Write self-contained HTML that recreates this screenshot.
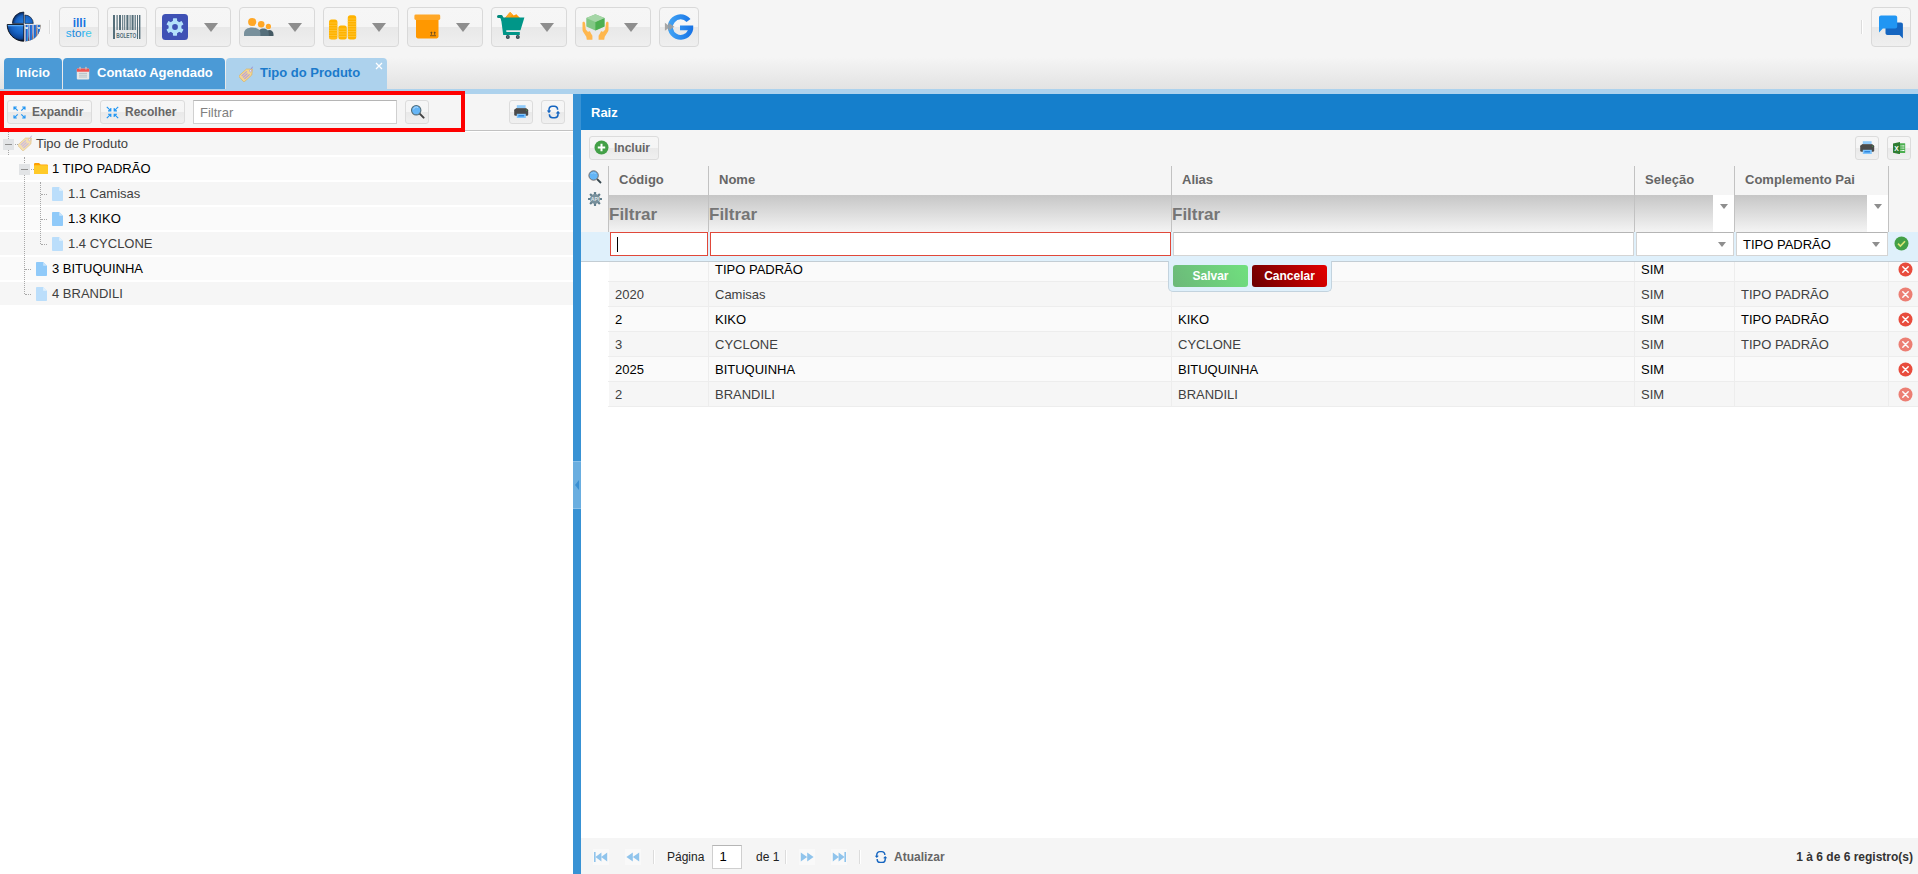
<!DOCTYPE html>
<html lang="pt-BR">
<head>
<meta charset="utf-8">
<title>Tipo do Produto</title>
<style>
*{box-sizing:border-box;margin:0;padding:0}
html,body{width:1918px;height:874px;overflow:hidden;background:#fff;font-family:"Liberation Sans",Arial,sans-serif;font-size:13px;color:#000}
.abs{position:absolute}
#top{position:absolute;left:0;top:0;width:1918px;height:89px;background:linear-gradient(#f5f5f5 0,#f5f5f5 57px,#e3e3e3 89px)}
.tb{position:absolute;top:7px;height:40px;border:1px solid #d9d9d9;border-radius:4px;background:linear-gradient(#f6f6f6 0,#f5f5f5 50%,#e8e8e8 50%,#efefef 100%)}
.tb svg{position:absolute}
.tb .arr{position:absolute;left:47.500px;top:15px;width:0;height:0;border-left:7px solid transparent;border-right:7px solid transparent;border-top:9px solid #8e8e8e}
.sep{position:absolute;width:1px;background:#fff;border-left:1px solid #dcdcdc;width:2px}
.tab{position:absolute;top:58px;height:31px;border-radius:4px 4px 0 0;background:#4b9ad6;color:#fff;font-weight:bold;font-size:13px;line-height:30px;white-space:nowrap}
.tab.act{background:#add2ed;color:#1b7acb}
#strip{position:absolute;left:0;top:89px;width:1918px;height:5px;background:#add2ed}
/* left panel */
#left{position:absolute;left:0;top:94px;width:573px;height:780px;background:#fff}
#ltb{position:absolute;left:0;top:0;width:573px;height:37px;background:#f5f5f5;border-bottom:1px solid #c2c2c2}
.sb{position:absolute;height:24px;border:1px solid #dcdcdc;border-radius:3px;background:linear-gradient(#f6f6f6 0,#f5f5f5 50%,#e9e9e9 50%,#f0f0f0 100%);font-size:12px;font-weight:bold;color:#666;line-height:21px;white-space:nowrap}
.sb svg{position:absolute}
.sb span{margin-top:1px}
#red{position:absolute;left:0;top:91px;width:465px;height:41px;border:4px solid #fe0000;z-index:5}
.trow{position:absolute;left:0;width:573px;height:23px;font-size:13px;line-height:23px;white-space:nowrap}
.trow.a{background:#f6f6f6;color:#404040}
.trow.b{background:#fafafa;color:#000}
.trow span{position:absolute;top:0}
.trow svg{position:absolute}
/* splitter */
#split{position:absolute;left:573px;top:94px;width:8px;height:780px;background:#3892d4}
#split i{position:absolute;left:0;top:367px;width:8px;height:48px;background:#6aaee0;border-top:1px solid #8cc0e8;border-bottom:1px solid #8cc0e8}
#split b{position:absolute;left:2px;top:386px;width:0;height:0;border-top:5px solid transparent;border-bottom:5px solid transparent;border-right:4.500px solid #3a8fd2}
/* right panel */
#right{position:absolute;left:581px;top:94px;width:1337px;height:780px;background:#fff}
#rh{position:absolute;left:0;top:0;width:1337px;height:36px;background:#157fcc;color:#fff;font-weight:bold;font-size:13px;line-height:38px;padding-left:10px}
#rtb{position:absolute;left:0;top:36px;width:1337px;height:36px;background:#f5f5f5}

.hd{font-size:13px;font-weight:bold;color:#666;line-height:27px;white-space:nowrap}
.flt{height:37px;background:linear-gradient(#c6c6c6,#f4f4f4);font-size:17px;font-weight:bold;color:#767676;line-height:37px}
.flt span{position:absolute;left:0;top:1px}
.carr{position:absolute;width:0;height:0;border-left:4.500px solid transparent;border-right:4.500px solid transparent;border-top:5px solid #8e8e8e}
.grow{position:absolute;left:27px;width:1310px;height:25px;border-bottom:1px solid #ededed;font-size:13px;line-height:25px;white-space:nowrap}
.grow.a{background:#f6f6f6;color:#404040}
.grow.b{background:#fafafa;color:#000}
.grow span{position:absolute;top:0;height:24px;padding-left:6px;border-left:1px solid #ededed}
.grow span:first-child{border-left-color:#fff}
.ed{height:24px;background:#fff;border:1px solid #d4d4d4;border-top-color:#b5b5b5;font-size:13px}
.ed.err{border-color:#e0483a}
.btn{width:75px;height:22px;border-radius:3px;color:#fff;font-size:12px;font-weight:bold;line-height:22px;text-align:center}
</style>
</head>
<body>
<div id="top">
<!-- logo -->
<svg class="abs" style="left:6px;top:11px" width="36" height="32" viewBox="0 0 36 32">
<defs>
<radialGradient id="lg" gradientUnits="userSpaceOnUse" cx="15" cy="13" r="17.500"><stop offset="0" stop-color="#2a86e6"/><stop offset=".55" stop-color="#1763c4"/><stop offset=".82" stop-color="#0c4496"/><stop offset="1" stop-color="#050a16"/></radialGradient>
<radialGradient id="lg2" gradientUnits="userSpaceOnUse" cx="18" cy="13" r="12"><stop offset="0" stop-color="#2a86e6"/><stop offset=".7" stop-color="#1763c4"/><stop offset="1" stop-color="#08265a"/></radialGradient>
<clipPath id="lq"><path d="M18.900 13.600h15.500a15.500 15.500 0 0 1-15.500 16.800z"/></clipPath>
</defs>
<path d="M17.800 12.400h-11.400a11.400 11.400 0 0 1 11.400-11.400z" fill="url(#lg2)" stroke="#0a1424" stroke-width="0.700"/>
<path d="M18.900 12.400v-8.400a8.400 8.400 0 0 1 8.400 8.400z" fill="url(#lg2)" stroke="#0a1424" stroke-width="0.600"/>
<path d="M17.800 13.600v16.600a16.600 16.600 0 0 1-16.600-16.600z" fill="url(#lg)" stroke="#05080f" stroke-width="0.900"/>
<path d="M1.600 14h15.800v1.300h-15.400z" fill="#5aa9f5"/>
<g clip-path="url(#lq)"><rect x="18.900" y="13.600" width="17" height="18" fill="url(#lg)"/>
<text transform="translate(18.600 30.400) scale(1 1.500)" font-family="Liberation Sans" font-weight="bold" font-size="14.500" fill="#1a62c8" stroke="#fff" stroke-width="1.100" paint-order="stroke">illi</text></g>
</svg>
<div class="sep" style="left:49px;top:20px;height:14px"></div>
<!-- illi store -->
<div class="tb" style="left:59px;width:40px">
<svg style="left:4px;top:9px" width="32" height="22" viewBox="0 0 32 22">
<defs><linearGradient id="sg" x1="0" y1="0" x2="1" y2="0"><stop offset="0" stop-color="#29b6f6"/><stop offset=".45" stop-color="#1976d2"/><stop offset=".7" stop-color="#29b6f6"/><stop offset="1" stop-color="#4dd0e1"/></linearGradient></defs>
<text x="8.700" y="9.900" font-family="Liberation Sans" font-weight="bold" font-size="12" fill="#1a73e0">illi</text>
<text x="1.800" y="19.600" font-family="Liberation Sans" font-size="10.600" fill="url(#sg)" textLength="26" lengthAdjust="spacingAndGlyphs">store</text>
</svg>
</div>
<!-- boleto -->
<div class="tb" style="left:107px;width:40px">
<svg style="left:5px;top:7px" width="28" height="25" viewBox="0 0 28 25">
<g fill="#546e7a"><rect x="0" y="0" width="2" height="24"/><rect x="3.5" y="0" width="1.2" height="15"/><rect x="6" y="0" width="2" height="15"/><rect x="9.2" y="0" width="1" height="15"/><rect x="11.2" y="0" width="1" height="15"/><rect x="13.4" y="0" width="2" height="15"/><rect x="16.6" y="0" width="1" height="15"/><rect x="18.6" y="0" width="2" height="15"/><rect x="21.6" y="0" width="1.2" height="15"/><rect x="24" y="0" width="1" height="24"/><rect x="26" y="0" width="1.4" height="24"/></g>
<text x="3.2" y="23.2" font-family="Liberation Sans" font-weight="bold" font-size="6.6" fill="#546e7a" textLength="20" lengthAdjust="spacingAndGlyphs">BOLETO</text>
</svg>
</div>
<!-- settings -->
<div class="tb" style="left:155px;width:76px">
<svg style="left:6px;top:6px" width="26" height="26" viewBox="0 0 26 26">
<rect x="0" y="0" width="26" height="26" rx="3.5" fill="#3f51b5"/>
<g transform="translate(13 13) scale(0.900)" fill="#b3e0fb">
<g id="teeth"><rect x="-2.3" y="-9.6" width="4.6" height="19.2" rx="0.6"/><rect x="-2.3" y="-9.6" width="4.6" height="19.2" rx="0.6" transform="rotate(60)"/><rect x="-2.3" y="-9.6" width="4.6" height="19.2" rx="0.6" transform="rotate(120)"/></g>
<circle r="7.2"/><circle r="3.2" fill="#3f51b5"/></g>
</svg>
<i class="arr"></i>
</div>
<!-- people -->
<div class="tb" style="left:239px;width:76px">
<svg style="left:4px;top:9px" width="32" height="20" viewBox="0 0 32 20">
<path d="M24 19 v-1.5 c0-3 2-4.6 4-4.600 s4 1.600 4 4.600 v1.500z" fill="#455a64" transform="translate(-2.5 0)"/>
<path d="M14 19 v-2 c0-3.600 2.600-5.400 5.400-5.400 s5.400 1.800 5.400 5.400 v2z" fill="#546e7a"/>
<path d="M0 19 v-2.500 c0-4 3.600-6 8.200-6 s8.200 2 8.200 6 v2.500z" fill="#78909c"/>
<circle cx="8.200" cy="5" r="4.100" fill="#ffa726"/>
<circle cx="17.200" cy="7.200" r="3.300" fill="#ffa726"/>
<circle cx="24.400" cy="9.400" r="2.600" fill="#ffa726"/>
</svg>
<i class="arr"></i>
</div>
<!-- coins -->
<div class="tb" style="left:323px;width:76px">
<svg style="left:5.300px;top:6.600px" width="28" height="25" viewBox="0 0 28 25">
<g fill="#ffb300">
<rect x="0" y="4.500" width="8.400" height="20" rx="2.500"/>
<rect x="9.400" y="10.500" width="8.400" height="14" rx="2.500"/>
<rect x="18.800" y="0.300" width="8.400" height="24.200" rx="2.500"/>
</g>
<g stroke="#ffc940" stroke-width="0.7">
<path d="M0 8h8.400M0 10.500h8.400M0 13h8.400M0 15.500h8.400M0 18h8.400M0 20.500h8.400M0 23h8.400M9.400 14h8.400M9.400 16.500h8.400M9.400 19h8.400M9.400 21.500h8.400M18.800 4h8.400M18.800 6.500h8.400M18.800 9h8.400M18.800 11.500h8.400M18.800 14h8.400M18.800 16.500h8.400M18.800 19h8.400M18.800 21.500h8.400"/>
</g>
</svg>
<i class="arr"></i>
</div>
<!-- box -->
<div class="tb" style="left:407px;width:76px">
<svg style="left:6px;top:6.400px" width="28" height="25" viewBox="0 0 28 25">
<rect x="2" y="4" width="22.500" height="20.400" rx="1.800" fill="#ff9800"/>
<rect x="0.400" y="0.400" width="25.800" height="5.600" rx="1.400" fill="#ffa726"/>
<g fill="#6d4c1f"><rect x="16" y="21.300" width="6" height="0.900"/><path d="M17.400 17.400l1.300 1.500h-0.800v1.900h-1v-1.900h-0.800zM20.700 17.400l1.300 1.500h-0.800v1.900h-1v-1.900h-0.800z"/></g>
</svg>
<i class="arr"></i>
</div>
<!-- cart -->
<div class="tb" style="left:491px;width:76px">
<svg style="left:5px;top:4px" width="30" height="30" viewBox="0 0 30 30">
<path d="M8 6l5.100-6 3.600 3.600 2.700-1.400 3.600 3.800z" fill="#ff9800"/>
<path d="M13.100 0l2.400 2.500-3.500 3.500h-4z" fill="#ffa726"/>
<path d="M1.500 4.600h2.800l1.600 3.400" stroke="#00897b" stroke-width="3" stroke-linecap="round" stroke-linejoin="round" fill="none"/>
<path d="M3.900 5.600h23.500l-3.900 12.600h-14.300l0.200 1.900h13.400v2.900h-16.600z" fill="#009688"/>
<circle cx="10.800" cy="24.900" r="2" fill="#37474f"/><circle cx="20.800" cy="24.900" r="2" fill="#37474f"/>
<circle cx="10.800" cy="24.900" r="0.800" fill="#607d8b"/><circle cx="20.800" cy="24.900" r="0.800" fill="#607d8b"/>
</svg>
<i class="arr"></i>
</div>
<!-- hands box -->
<div class="tb" style="left:575px;width:76px">
<svg style="left:5px;top:4px" width="30" height="30" viewBox="0 0 30 30">
<path d="M14.400 2.300l9.100 3.800v8.400l-9.100 4-9.100-4v-8.400z" fill="#81c784"/>
<path d="M14.400 10l9.100-3.900v8.400l-9.100 4z" fill="#4caf50"/>
<path d="M14.400 2.300l9.100 3.800-9.100 3.900-9.100-3.900z" fill="#a5d6a7"/>
<path transform="translate(-0.800 0)" d="M3.400 9.800c0.900 0 1.400 0.600 1.500 1.500l0.700 6.300 2.300 2.400c0.700-1.400 2.600-0.700 2.500 0.800l1.800 3v4h-5.600l-0.500-3-3.200-5c-0.400-0.700-0.600-1.400-0.600-2.200v-6.600c0-0.700 0.400-1.200 1.100-1.200z" fill="#ffb74d"/>
<path transform="translate(-0.800 0)" d="M27.200 9.800c-0.900 0-1.400 0.600-1.500 1.500l-0.700 6.300-2.300 2.400c-0.700-1.400-2.600-0.700-2.500 0.800l-1.800 3v4h5.600l0.500-3 3.200-5c0.400-0.700 0.600-1.400 0.600-2.200v-6.600c0-0.700-0.400-1.200-1.100-1.200z" fill="#ffb74d"/>
</svg>
<i class="arr"></i>
</div>
<!-- G refresh -->
<div class="tb" style="left:659px;width:40px">
<svg style="left:4px;top:3px" width="32" height="32" viewBox="0 0 32 32">
<defs><linearGradient id="gg" x1="0" y1="0" x2="1" y2="0"><stop offset="0" stop-color="#42a5f5"/><stop offset="1" stop-color="#1672e6"/></linearGradient></defs>
<path d="M26.49 7.92 A12.8 12.8 0 1 0 29.20 18.20 L29.20 14.40 L16.00 14.40 L16.00 19.20 L23.90 19.20 A7.8 7.8 0 1 1 22.55 11.00 Z" fill="url(#gg)"/>
<path d="M0.900 11.800l5.400 4-5.400 4zM4.400 11.800l6 4-6 4z" fill="#9e9e9e" opacity="0.900"/>
</svg>
</div>
<div class="sep" style="left:1861px;top:20px;height:14px"></div>
<!-- chat -->
<div class="tb" style="left:1871px;width:40px">
<svg style="left:7px;top:7px" width="26" height="26" viewBox="0 0 26 26">
<path d="M8.500 7.400h13.400c1.300 0 2 0.900 2 2v14l-3.400-3.400h-12c-1.200 0-2-0.900-2-2v-8.600c0-1.200 0.900-2 2-2z" fill="#1565c0"/>
<path d="M2 0.500h14.200c1.200 0 2 0.900 2 2v9c0 1.200-0.900 2-2 2h-12.400l-3.800 4v-15c0-1.200 0.900-2 2-2z" fill="#2196f3"/>
</svg>
</div>
<!-- tabs -->
<div class="tab" style="left:4px;width:58px;padding-left:12px">Início</div>
<div class="tab" style="left:63px;width:162px">
<svg class="abs" style="left:13px;top:8px" width="14" height="14" viewBox="0 0 14 14"><rect x="0.800" y="2.600" width="12.400" height="10.800" rx="1" fill="#e6e6e6"/><path d="M0.800 3.600c0-0.700 0.500-1.200 1.200-1.200h10c0.700 0 1.200 0.500 1.200 1.200v2.200h-12.400z" fill="#ef5350"/><rect x="3.300" y="0.800" width="1.500" height="2.700" rx="0.500" fill="#bdbdbd"/><rect x="9.200" y="0.800" width="1.500" height="2.700" rx="0.500" fill="#bdbdbd"/><path d="M3 7.400h8M3 9.200h8M3 11h8" stroke="#b0bec5" stroke-width="0.900"/></svg>
<span class="abs" style="left:34px;top:0">Contato Agendado</span></div>
<div class="tab act" style="left:226px;width:161px">
<svg class="abs" style="left:12.500px;top:7px" width="17" height="17" viewBox="0 0 17 17"><g transform="translate(8.500 8.500) rotate(-42)"><path d="M-7.400 -4h9.600l4.400 4-4.400 4h-9.600c-0.600 0-1-0.400-1-1v-6c0-0.600 0.400-1 1-1z" fill="#f5d791" stroke="#d9b36a" stroke-width="0.700"/><circle cx="4" cy="0" r="1" fill="#fff" stroke="#9575cd" stroke-width="0.500"/><path d="M6 -0.700l2.200 -1" stroke="#9575cd" stroke-width="0.700"/><path d="M-6 -2h7M-6 0h6M-6 2h7" stroke="#b9a0d8" stroke-width="1.100"/></g></svg>
<span class="abs" style="left:34px;top:0">Tipo do Produto</span>
<svg class="abs" style="left:149px;top:4px" width="8" height="8" viewBox="0 0 8 8"><path d="M1 1l6 6M7 1l-6 6" stroke="#fff" stroke-width="1.300"/></svg>
</div>

</div>
<div id="strip"></div>
<div id="left">
<div id="ltb">
<div class="sb" style="left:7px;top:6px;width:85px"><svg style="left:5px;top:5px" width="13" height="13" viewBox="0 0 13 13"><g stroke="#2196f3" stroke-width="1.150" fill="none"><path d="M1 3.800v-2.800h2.800M1.200 1.200l3.500 3.500M9.200 1h2.800v2.800M11.800 1.200l-3.500 3.500M1 9.200v2.800h2.800M1.200 11.800l3.500-3.500M9.200 12h2.800v-2.800M11.800 11.800l-3.500-3.500"/></g></svg><span class="abs" style="left:24px;top:0">Expandir</span></div>
<div class="sb" style="left:100px;top:6px;width:85px"><svg style="left:5px;top:5px" width="13" height="13" viewBox="0 0 13 13"><g stroke="#2196f3" stroke-width="1.150" fill="none"><path d="M2 4.800h2.800v-2.800M4.600 4.600l-3.800-3.800M8.200 2v2.800h2.800M8.400 4.600l3.800-3.800M2 8.200h2.800v2.800M4.600 8.400l-3.800 3.800M11 8.200h-2.800v2.800M8.400 8.400l3.800 3.800"/></g></svg><span class="abs" style="left:24px;top:0">Recolher</span></div>
<div class="abs" style="left:193px;top:6px;width:204px;height:24px;background:#fff;border:1px solid #d0d0d0;border-top-color:#b5b5b5;font-size:13px;color:#808080;line-height:23px;padding-left:6px">Filtrar</div>
<div class="sb" style="left:405px;top:6px;width:24px"><svg style="left:4px;top:3px" width="15" height="15" viewBox="0 0 15 15"><path d="M9.400 9.400l4.200 4.200" stroke="#424242" stroke-width="2" stroke-linecap="round"/><circle cx="6.200" cy="6.200" r="4.700" fill="#64b5f6" stroke="#546e7a" stroke-width="1.100"/><path d="M3.400 5.400a3 3 0 0 1 4.600-1.800" stroke="#bbdefb" stroke-width="0.900" fill="none"/></svg></div>
<div class="sb" style="left:509px;top:6px;width:24px"><svg style="left:4px;top:4px" width="15" height="14" viewBox="0 0 15 14"><rect x="2.800" y="0.200" width="8.800" height="4.200" fill="#90caf9"/><path d="M2.200 3h10l1.200 1.200h-12.400z" fill="#616161"/><rect x="0.200" y="4" width="14" height="6.800" rx="1.300" fill="#4a4a4a"/><rect x="12" y="4.700" width="1" height="1" fill="#43a047"/><rect x="2.800" y="8.800" width="9" height="4.200" fill="#80c4fb"/><path d="M4.600 10h5.800l-0.600 1.600h-5.800z" fill="#2e86de"/></svg></div>
<div class="sb" style="left:541px;top:6px;width:24px"><svg style="left:4px;top:3px" width="15" height="16" viewBox="0 0 15 16"><g stroke="#1565c0" stroke-width="1.500" fill="none"><path d="M3 7.200v-1.800a3.200 3.200 0 0 1 3.200-3.200h2.200a3.200 3.200 0 0 1 3.200 3.200v0.400"/><path d="M12 8.800v1.800a3.200 3.200 0 0 1-3.200 3.200h-2.200a3.200 3.200 0 0 1-3.200-3.200v-0.400"/></g><path d="M0.800 6.600h4.400l-2.200 2.600z" fill="#1565c0"/><path d="M14.200 9.400h-4.400l2.200-2.600z" fill="#1565c0"/></svg></div>

</div>
<div class="trow a" style="top:38px"><svg style="left:18px;top:2.400px" width="17" height="17" viewBox="0 0 17 17" opacity="0.700"><g transform="translate(8.500 8.500) rotate(-42)"><path d="M-7.400 -4h9.600l4.400 4-4.400 4h-9.600c-0.600 0-1-0.400-1-1v-6c0-0.600 0.400-1 1-1z" fill="#f5d791" stroke="#d9b36a" stroke-width="0.700"/><circle cx="4" cy="0" r="1" fill="#fff" stroke="#9575cd" stroke-width="0.500"/><path d="M6 -0.700l2.200 -1" stroke="#9575cd" stroke-width="0.700"/><path d="M-6 -2h7M-6 0h6M-6 2h7" stroke="#b9a0d8" stroke-width="1.100"/></g></svg><i class="abs" style="left:3px;top:7px;width:11px;height:11px;background:#e2e4e6"></i><i class="abs" style="left:5px;top:12px;width:7px;height:1px;background:#909090"></i><span style="left:36px">Tipo de Produto</span></div>
<div class="trow b" style="top:63px"><svg style="left:34px;top:6px" width="14" height="11" viewBox="0 0 14 12" preserveAspectRatio="none"><path d="M0 1.400c0-0.800 0.600-1.400 1.400-1.400h3.600l1.600 1.600h6c0.800 0 1.400 0.600 1.400 1.400v7.600c0 0.800-0.600 1.400-1.400 1.400h-11.200c-0.800 0-1.400-0.600-1.400-1.400z" fill="#ffa000"/><path d="M0 3.400c0-0.600 0.500-1 1-1h12c0.600 0 1 0.500 1 1v7.200c0 0.800-0.600 1.400-1.400 1.400h-11.200c-0.800 0-1.400-0.600-1.400-1.400z" fill="#ffca28"/></svg><i class="abs" style="left:19px;top:7px;width:11px;height:11px;background:#e2e4e6"></i><i class="abs" style="left:21px;top:12px;width:7px;height:1px;background:#909090"></i><span style="left:52px">1 TIPO PADRÃO</span></div>
<div class="trow a" style="top:88px"><svg style="left:52px;top:5px" width="11" height="14" viewBox="0 0 11 14"><path d="M0 0.800c0-0.400 0.400-0.800 0.800-0.800h6.400l3.800 3.800v9.400c0 0.400-0.400 0.800-0.800 0.800h-9.400c-0.400 0-0.800-0.400-0.800-0.800z" fill="#bbdefb"/><path d="M7.200 0l3.800 3.800h-3.800z" fill="#e3f2fd"/></svg><span style="left:68px">1.1 Camisas</span></div>
<div class="trow b" style="top:113px"><svg style="left:52px;top:5px" width="11" height="14" viewBox="0 0 11 14"><path d="M0 0.800c0-0.400 0.400-0.800 0.800-0.800h6.400l3.800 3.800v9.400c0 0.400-0.400 0.800-0.800 0.800h-9.400c-0.400 0-0.800-0.400-0.800-0.800z" fill="#90caf9"/><path d="M7.200 0l3.800 3.800h-3.800z" fill="#c8e4fb"/></svg><span style="left:68px">1.3 KIKO</span></div>
<div class="trow a" style="top:138px"><svg style="left:52px;top:5px" width="11" height="14" viewBox="0 0 11 14"><path d="M0 0.800c0-0.400 0.400-0.800 0.800-0.800h6.400l3.800 3.800v9.400c0 0.400-0.400 0.800-0.800 0.800h-9.400c-0.400 0-0.800-0.400-0.800-0.800z" fill="#bbdefb"/><path d="M7.200 0l3.800 3.800h-3.800z" fill="#e3f2fd"/></svg><span style="left:68px">1.4 CYCLONE</span></div>
<div class="trow b" style="top:163px"><svg style="left:36px;top:5px" width="11" height="14" viewBox="0 0 11 14"><path d="M0 0.800c0-0.400 0.400-0.800 0.800-0.800h6.400l3.800 3.800v9.400c0 0.400-0.400 0.800-0.800 0.800h-9.400c-0.400 0-0.800-0.400-0.800-0.800z" fill="#90caf9"/><path d="M7.200 0l3.800 3.800h-3.800z" fill="#c8e4fb"/></svg><span style="left:52px">3 BITUQUINHA</span></div>
<div class="trow a" style="top:188px"><svg style="left:36px;top:5px" width="11" height="14" viewBox="0 0 11 14"><path d="M0 0.800c0-0.400 0.400-0.800 0.800-0.800h6.400l3.800 3.800v9.400c0 0.400-0.400 0.800-0.800 0.800h-9.400c-0.400 0-0.800-0.400-0.800-0.800z" fill="#bbdefb"/><path d="M7.200 0l3.800 3.800h-3.800z" fill="#e3f2fd"/></svg><span style="left:52px">4 BRANDILI</span></div>
<i class="abs" style="left:8px;top:38px;width:0;height:7px;border-left:1px dotted #a8a8a8"></i>
<i class="abs" style="left:8px;top:56px;width:0;height:5px;border-left:1px dotted #a8a8a8"></i>
<i class="abs" style="left:24px;top:63px;width:0;height:6px;border-left:1px dotted #a8a8a8"></i>
<i class="abs" style="left:24px;top:81px;width:0;height:119px;border-left:1px dotted #a8a8a8"></i>
<i class="abs" style="left:15px;top:50px;width:3px;height:0;border-top:1px dotted #a8a8a8"></i>
<i class="abs" style="left:31px;top:75px;width:3px;height:0;border-top:1px dotted #a8a8a8"></i>
<i class="abs" style="left:40px;top:88px;width:0;height:62px;border-left:1px dotted #a8a8a8"></i>
<i class="abs" style="left:41px;top:100px;width:6px;height:0;border-top:1px dotted #a8a8a8"></i>
<i class="abs" style="left:41px;top:125px;width:6px;height:0;border-top:1px dotted #a8a8a8"></i>
<i class="abs" style="left:41px;top:150px;width:6px;height:0;border-top:1px dotted #a8a8a8"></i>
<i class="abs" style="left:25px;top:175px;width:6px;height:0;border-top:1px dotted #a8a8a8"></i>
<i class="abs" style="left:25px;top:200px;width:6px;height:0;border-top:1px dotted #a8a8a8"></i>
</div>
<div id="red"></div>
<div id="split"><i></i><b></b></div>
<div id="right">
<div id="rh">Raiz</div>
<div id="rtb">
<div class="sb" style="left:8px;top:6px;width:70px"><svg style="left:4px;top:3px" width="15" height="15" viewBox="0 0 15 15"><circle cx="7.500" cy="7.500" r="7" fill="#43a047"/><path d="M7.500 3.800v7.400M3.800 7.500h7.400" stroke="#fff" stroke-width="2"/></svg><span class="abs" style="left:24px;top:0">Incluir</span></div>
<div class="sb" style="left:1274px;top:6px;width:24px"><svg style="left:4px;top:4px" width="15" height="14" viewBox="0 0 15 14"><rect x="2.800" y="0.200" width="8.800" height="4.200" fill="#90caf9"/><path d="M2.200 3h10l1.200 1.200h-12.400z" fill="#616161"/><rect x="0.200" y="4" width="14" height="6.800" rx="1.300" fill="#4a4a4a"/><rect x="12" y="4.700" width="1" height="1" fill="#43a047"/><rect x="2.800" y="8.800" width="9" height="4.200" fill="#80c4fb"/><path d="M4.600 10h5.800l-0.600 1.600h-5.800z" fill="#2e86de"/></svg></div>
<div class="sb" style="left:1306px;top:6px;width:24px"><svg style="left:5px;top:5px" width="13" height="12" viewBox="0 0 13 12"><rect x="5" y="1.200" width="7.200" height="9.800" rx="0.500" fill="#4caf50"/><g fill="#fff"><rect x="7.600" y="3.400" width="1" height="1"/><rect x="9.200" y="3.400" width="2.200" height="1"/><rect x="7.600" y="8" width="1" height="1"/><rect x="9.200" y="8" width="2.200" height="1"/></g><g fill="#a5d6a7"><rect x="7.600" y="5.300" width="1" height="1.800"/><rect x="9.200" y="5.300" width="2.200" height="1.800"/></g><path d="M0 1.400l7-1.400v12.200l-7-1.400z" fill="#2e7d32"/><text x="1.300" y="8.700" font-family="Liberation Sans" font-weight="bold" font-size="6.800" fill="#fff">X</text></svg></div>
</div>
<div class="abs" style="left:0;top:72px;width:1337px;height:66px;background:#f5f5f5"></div>
<svg class="abs" style="left:6px;top:76px" width="16" height="15" viewBox="0 0 16 15"><path d="M10 9l4 4" stroke="#37474f" stroke-width="1.800" stroke-linecap="butt"/><circle cx="6.600" cy="5.500" r="4.700" fill="#64b5f6" stroke="#6b625f" stroke-width="0.900"/><path d="M4.400 3.600a3.400 3.400 0 0 1 4.400 0" stroke="#a6d4fa" stroke-width="0.800" fill="none"/></svg>
<svg class="abs" style="left:7px;top:98px" width="14" height="14" viewBox="0 0 14 14"><g transform="translate(7 7)" fill="#607d8b"><rect x="-1.100" y="-7" width="2.200" height="14" rx="0.400"/><rect x="-1.100" y="-7" width="2.200" height="14" rx="0.400" transform="rotate(45)"/><rect x="-1.100" y="-7" width="2.200" height="14" rx="0.400" transform="rotate(90)"/><rect x="-1.100" y="-7" width="2.200" height="14" rx="0.400" transform="rotate(135)"/><circle r="5.100" fill="#78909c"/></g><text x="7" y="8.900" text-anchor="middle" font-family="Liberation Sans" font-weight="bold" font-size="5.200" fill="#dfe6ea">API</text></svg>
<div class="abs" style="left:27px;top:72px;width:1px;height:66px;background:#c2c2c2"></div>
<div class="abs hd" style="left:38px;top:72px">Código</div>
<div class="abs flt" style="left:28px;top:101px;width:99px"><span>Filtrar</span></div>
<div class="abs" style="left:127px;top:72px;width:1px;height:66px;background:#c2c2c2"></div>
<div class="abs hd" style="left:138px;top:72px">Nome</div>
<div class="abs flt" style="left:128px;top:101px;width:462px"><span>Filtrar</span></div>
<div class="abs" style="left:590px;top:72px;width:1px;height:66px;background:#c2c2c2"></div>
<div class="abs hd" style="left:601px;top:72px">Alias</div>
<div class="abs flt" style="left:591px;top:101px;width:462px"><span>Filtrar</span></div>
<div class="abs" style="left:1053px;top:72px;width:1px;height:66px;background:#c2c2c2"></div>
<div class="abs hd" style="left:1064px;top:72px">Seleção</div>
<div class="abs flt" style="left:1054px;top:101px;width:78px"></div>
<div class="abs" style="left:1132px;top:101px;width:21px;height:37px;background:#fff"><i class="carr" style="left:6.500px;top:9px"></i></div>
<div class="abs" style="left:1153px;top:72px;width:1px;height:66px;background:#c2c2c2"></div>
<div class="abs hd" style="left:1164px;top:72px">Complemento Pai</div>
<div class="abs flt" style="left:1154px;top:101px;width:132px"></div>
<div class="abs" style="left:1286px;top:101px;width:21px;height:37px;background:#fff"><i class="carr" style="left:6.500px;top:9px"></i></div>
<div class="abs" style="left:1307px;top:72px;width:1px;height:66px;background:#c2c2c2"></div>
<div class="grow b" style="top:163px"><span style="left:0px;width:100px"></span><span style="left:100px;width:463px">TIPO PADRÃO</span><span style="left:563px;width:463px"></span><span style="left:1026px;width:100px">SIM</span><span style="left:1126px;width:154px"></span><span style="left:1280px;width:30px"><svg style="position:absolute;left:8.500px;top:4.600px;opacity:1" width="15" height="15" viewBox="0 0 15 15"><circle cx="7.500" cy="7.500" r="7" fill="#e84c3d"/><path d="M4.800 4.800l5.400 5.400M10.200 4.800l-5.400 5.400" stroke="#fff" stroke-width="1.500" stroke-linecap="round"/></svg></span></div>
<div class="grow a" style="top:188px"><span style="left:0px;width:100px">2020</span><span style="left:100px;width:463px">Camisas</span><span style="left:563px;width:463px"></span><span style="left:1026px;width:100px">SIM</span><span style="left:1126px;width:154px">TIPO PADRÃO</span><span style="left:1280px;width:30px"><svg style="position:absolute;left:8.500px;top:4.600px;opacity:0.700" width="15" height="15" viewBox="0 0 15 15"><circle cx="7.500" cy="7.500" r="7" fill="#e84c3d"/><path d="M4.800 4.800l5.400 5.400M10.200 4.800l-5.400 5.400" stroke="#fff" stroke-width="1.500" stroke-linecap="round"/></svg></span></div>
<div class="grow b" style="top:213px"><span style="left:0px;width:100px">2</span><span style="left:100px;width:463px">KIKO</span><span style="left:563px;width:463px">KIKO</span><span style="left:1026px;width:100px">SIM</span><span style="left:1126px;width:154px">TIPO PADRÃO</span><span style="left:1280px;width:30px"><svg style="position:absolute;left:8.500px;top:4.600px;opacity:1" width="15" height="15" viewBox="0 0 15 15"><circle cx="7.500" cy="7.500" r="7" fill="#e84c3d"/><path d="M4.800 4.800l5.400 5.400M10.200 4.800l-5.400 5.400" stroke="#fff" stroke-width="1.500" stroke-linecap="round"/></svg></span></div>
<div class="grow a" style="top:238px"><span style="left:0px;width:100px">3</span><span style="left:100px;width:463px">CYCLONE</span><span style="left:563px;width:463px">CYCLONE</span><span style="left:1026px;width:100px">SIM</span><span style="left:1126px;width:154px">TIPO PADRÃO</span><span style="left:1280px;width:30px"><svg style="position:absolute;left:8.500px;top:4.600px;opacity:0.700" width="15" height="15" viewBox="0 0 15 15"><circle cx="7.500" cy="7.500" r="7" fill="#e84c3d"/><path d="M4.800 4.800l5.400 5.400M10.200 4.800l-5.400 5.400" stroke="#fff" stroke-width="1.500" stroke-linecap="round"/></svg></span></div>
<div class="grow b" style="top:263px"><span style="left:0px;width:100px">2025</span><span style="left:100px;width:463px">BITUQUINHA</span><span style="left:563px;width:463px">BITUQUINHA</span><span style="left:1026px;width:100px">SIM</span><span style="left:1126px;width:154px"></span><span style="left:1280px;width:30px"><svg style="position:absolute;left:8.500px;top:4.600px;opacity:1" width="15" height="15" viewBox="0 0 15 15"><circle cx="7.500" cy="7.500" r="7" fill="#e84c3d"/><path d="M4.800 4.800l5.400 5.400M10.200 4.800l-5.400 5.400" stroke="#fff" stroke-width="1.500" stroke-linecap="round"/></svg></span></div>
<div class="grow a" style="top:288px"><span style="left:0px;width:100px">2</span><span style="left:100px;width:463px">BRANDILI</span><span style="left:563px;width:463px">BRANDILI</span><span style="left:1026px;width:100px">SIM</span><span style="left:1126px;width:154px"></span><span style="left:1280px;width:30px"><svg style="position:absolute;left:8.500px;top:4.600px;opacity:0.700" width="15" height="15" viewBox="0 0 15 15"><circle cx="7.500" cy="7.500" r="7" fill="#e84c3d"/><path d="M4.800 4.800l5.400 5.400M10.200 4.800l-5.400 5.400" stroke="#fff" stroke-width="1.500" stroke-linecap="round"/></svg></span></div>
<div class="abs" style="left:0;top:138px;width:1337px;height:30px;background:#dff0fb;border-bottom:1px solid #c3cdd4"></div>
<div class="abs ed err" style="left:29px;top:138px;width:98px"><i class="abs" style="left:6px;top:4px;width:1px;height:15px;background:#000"></i></div>
<div class="abs ed err" style="left:129px;top:138px;width:461px"></div>
<div class="abs ed" style="left:592px;top:138px;width:461px"></div>
<div class="abs ed" style="left:1055px;top:138px;width:98px"><i class="carr" style="left:81px;top:9px"></i></div>
<div class="abs ed" style="left:1155px;top:138px;width:152px;padding-left:6px;line-height:23px">TIPO PADRÃO<i class="carr" style="left:135px;top:9px"></i></div>
<svg class="abs" style="left:1313px;top:142px" width="15" height="15" viewBox="0 0 15 15"><circle cx="7.500" cy="7.500" r="7" fill="#43a047"/><path d="M4 7.600l2.400 2.400 4.600-4.800" stroke="#dce775" stroke-width="1.600" fill="none"/></svg>
<div class="abs" style="left:587px;top:167px;width:164px;height:31px;background:#dff0fb;border:1px solid #c3d3de;border-top:none;border-radius:0 0 5px 5px"></div>
<div class="abs btn" style="left:592px;top:171px;background:linear-gradient(60deg,#6cb87a,#70e07e)">Salvar</div>
<div class="abs btn" style="left:671px;top:171px;background:linear-gradient(60deg,#6a0000,#e40000)">Cancelar</div>
<div class="abs" style="left:0;top:744px;width:1337px;height:36px;background:#f5f5f5"></div>
<svg class="abs" style="left:12px;top:755px;background:#f9f9f9" width="16" height="16" viewBox="0 0 16 16"><g fill="#90c4ec"><rect x="1" y="3" width="1.600" height="10"/><path d="M8.200 8l6-4.600v9.200zM2.400 8l6-4.600v9.200z"/></g></svg>
<svg class="abs" style="left:44px;top:755px;background:#f9f9f9" width="16" height="16" viewBox="0 0 16 16"><g fill="#90c4ec"><path d="M7.800 8l6.400-4.600v9.200zM1.400 8l6.400-4.600v9.200z"/></g></svg>
<svg class="abs" style="left:218px;top:755px;background:#f9f9f9" width="16" height="16" viewBox="0 0 16 16"><g fill="#90c4ec"><path d="M8.200 8l-6.400-4.600v9.200zM14.600 8l-6.400-4.600v9.200z"/></g></svg>
<svg class="abs" style="left:250px;top:755px;background:#f9f9f9" width="16" height="16" viewBox="0 0 16 16"><g fill="#90c4ec"><rect x="13.400" y="3" width="1.600" height="10"/><path d="M7.800 8l-6-4.600v9.200zM13.600 8l-6-4.600v9.200z"/></g></svg>
<div class="sep" style="left:72px;top:756px;height:14px"></div>
<div class="sep" style="left:204px;top:756px;height:14px"></div>
<div class="sep" style="left:278px;top:756px;height:14px"></div>
<div class="abs" style="left:86px;top:755px;font-size:12px;color:#222;line-height:16px">Página</div>
<div class="abs" style="left:131px;top:751px;width:30px;height:24px;background:#fff;border:1px solid #cfcfcf;border-top-color:#b5b5b5;font-size:13px;line-height:22px;padding-left:6.500px">1</div>
<div class="abs" style="left:175px;top:755px;font-size:12px;color:#222;line-height:16px">de 1</div>
<svg class="abs" style="left:293px;top:755px" width="14" height="16" viewBox="0 0 15 16"><g stroke="#1565c0" stroke-width="1.500" fill="none"><path d="M3 7.200v-1.800a3.200 3.200 0 0 1 3.200-3.200h2.200a3.200 3.200 0 0 1 3.200 3.200v0.400"/><path d="M12 8.800v1.800a3.200 3.200 0 0 1-3.200 3.200h-2.200a3.200 3.200 0 0 1-3.200-3.200v-0.400"/></g><path d="M0.800 6.600h4.400l-2.200 2.600z" fill="#1565c0"/><path d="M14.200 9.400h-4.400l2.200-2.600z" fill="#1565c0"/></svg>
<div class="abs" style="left:313px;top:755px;font-size:12px;font-weight:bold;color:#666;line-height:16px">Atualizar</div>
<div class="abs" style="right:5px;top:755px;font-size:12px;font-weight:bold;color:#333;line-height:16px">1 à 6 de 6 registro(s)</div>
</div>
</body>
</html>
